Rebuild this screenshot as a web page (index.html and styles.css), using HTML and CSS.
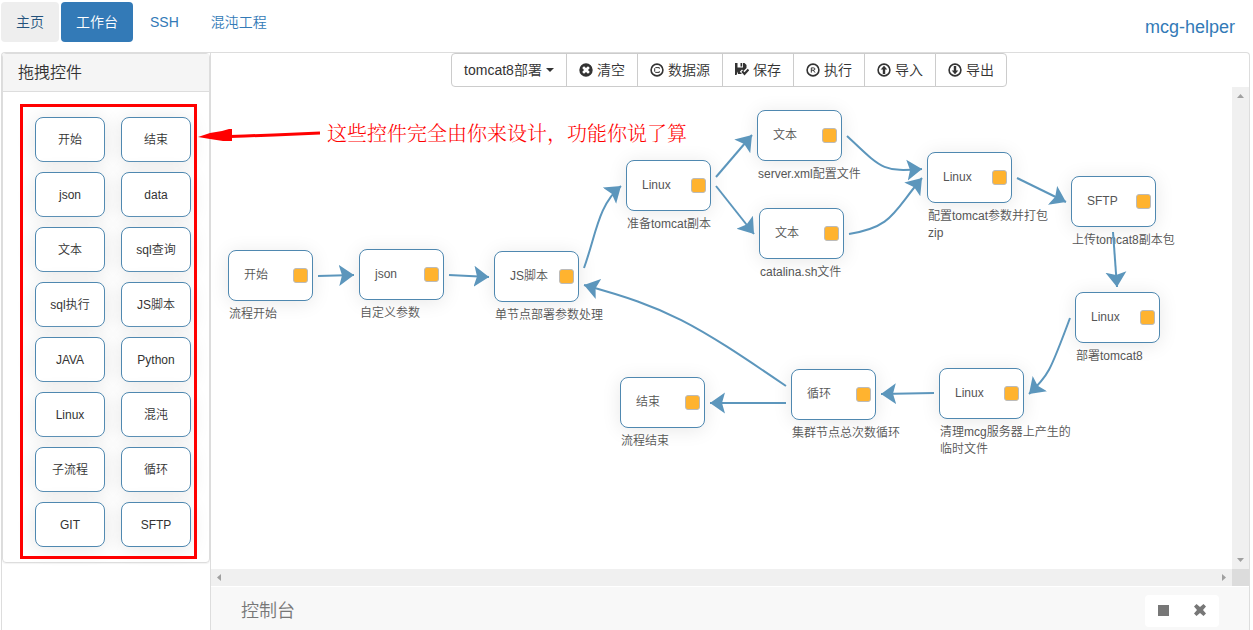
FILE: index.html
```html
<!DOCTYPE html>
<html lang="zh-CN">
<head>
<meta charset="utf-8">
<title>mcg-helper</title>
<link rel="stylesheet" href="styles.css">
</head>
<body>
<div class="app">
  <header class="topbar">
    <nav class="pills">
      <a class="pill pill-hover" href="#">主页</a>
      <a class="pill pill-active" href="#">工作台</a>
      <a class="pill" href="#">SSH</a>
      <a class="pill" href="#">混沌工程</a>
    </nav>
    <a class="brand" href="#">mcg-helper</a>
  </header>

  <main class="workspace">
    <aside class="sidebar">
      <section class="panel">
        <h2 class="panel-title">拖拽控件</h2>
        <div class="palette">
          <button class="tile">开始</button><button class="tile">结束</button>
          <button class="tile">json</button><button class="tile">data</button>
          <button class="tile">文本</button><button class="tile">sql查询</button>
          <button class="tile">sql执行</button><button class="tile">JS脚本</button>
          <button class="tile">JAVA</button><button class="tile">Python</button>
          <button class="tile">Linux</button><button class="tile">混沌</button>
          <button class="tile">子流程</button><button class="tile">循环</button>
          <button class="tile">GIT</button><button class="tile">SFTP</button>
          <div class="callout-box"></div>
        </div>
      </section>
    </aside>

    <section class="stage">
      <div class="toolbar">
        <button class="tool tool-menu">tomcat8部署<span class="caret"></span></button>
        <button class="tool"><svg class="icon" viewBox="0 0 14 14"><path fill="currentColor" fill-rule="evenodd" d="M7 .3a6.700 6.700 0 1 0 0 13.400 6.700 6.700 0 0 0 0-13.400zM5 3.200L7 5l2-1.800 1.800 1.800L9 7l1.800 2L9 10.800 7 9l-2 1.800L3.200 9 5 7 3.200 5z"/></svg>清空</button>
        <button class="tool"><svg class="icon" viewBox="0 0 14 14" fill="none" stroke="currentColor"><circle cx="7" cy="7" r="5.900" stroke-width="1.600"/><path d="M9.300 5.800V4.600H5.600l-.9.9v3l.9.9h3.700V8.200" stroke-width="1"/></svg>数据源</button>
        <button class="tool"><svg class="icon" viewBox="0 0 14 14" fill="currentColor"><path d="M0 0h2.500v4.500h5.500V0h1.500l2 2V5L8.500 8 7 6.500 4.800 8.800 7 11H3V8.500L1.500 12H0z"/><path d="M5.500 0h1.700v3.500H5.500z"/><path d="M6.300 9L7.800 7.500l1.700 1.800 3.200-3.600L14.200 7.200 9.500 12.500z"/></svg>保存</button>
        <button class="tool"><svg class="icon" viewBox="0 0 14 14" fill="none" stroke="currentColor"><circle cx="7" cy="7" r="5.900" stroke-width="1.600"/><path d="M5.300 9.600V4.900h2.400q1.200 0 1.200 1.100T7.700 7.200H5.500M7.300 7.200l1.700 2.400" stroke-width="1"/></svg>执行</button>
        <button class="tool"><svg class="icon" viewBox="0 0 14 14"><circle cx="7" cy="7" r="5.900" fill="none" stroke="currentColor" stroke-width="1.600"/><path fill="currentColor" d="M7 2.800l3.300 3.700H8.200V11H5.800V6.500H3.700z"/></svg>导入</button>
        <button class="tool"><svg class="icon" viewBox="0 0 14 14"><circle cx="7" cy="7" r="5.900" fill="none" stroke="currentColor" stroke-width="1.600"/><path fill="currentColor" d="M7 11.200L3.700 7.500h2.100V3h2.400v4.500h2.100z"/></svg>导出</button>
      </div>

      <div class="scroller">
        <div class="canvas">
          <div class="node n-start"><span>开始</span><i class="status"></i><p class="note">流程开始</p></div>
          <div class="node n-json"><span>json</span><i class="status"></i><p class="note">自定义参数</p></div>
          <div class="node n-js"><span>JS脚本</span><i class="status"></i><p class="note">单节点部署参数处理</p></div>
          <div class="node n-copy"><span>Linux</span><i class="status"></i><p class="note">准备tomcat副本</p></div>
          <div class="node n-server"><span>文本</span><i class="status"></i><p class="note">server.xml配置文件</p></div>
          <div class="node n-catalina"><span>文本</span><i class="status"></i><p class="note">catalina.sh文件</p></div>
          <div class="node n-zip"><span>Linux</span><i class="status"></i><p class="note">配置tomcat参数并打包zip</p></div>
          <div class="node n-sftp"><span>SFTP</span><i class="status"></i><p class="note">上传tomcat8副本包</p></div>
          <div class="node n-deploy"><span>Linux</span><i class="status"></i><p class="note">部署tomcat8</p></div>
          <div class="node n-clean"><span>Linux</span><i class="status"></i><p class="note">清理mcg服务器上产生的临时文件</p></div>
          <div class="node n-loop"><span>循环</span><i class="status"></i><p class="note">集群节点总次数循环</p></div>
          <div class="node n-end"><span>结束</span><i class="status"></i><p class="note">流程结束</p></div>

          <svg class="links" width="1021" height="482" viewBox="211 87 1021 482">
            <defs>
              <marker id="head" markerUnits="userSpaceOnUse" markerWidth="16" markerHeight="22" refX="15" refY="11" orient="auto">
                <path d="M15 11L0 .5l3 10.500L0 21.500z" fill="#5c96bc"/>
              </marker>
            </defs>
            <g fill="none" stroke="#5c96bc" stroke-width="2" marker-end="url(#head)">
              <path d="M318 276L354 275"/>
              <path d="M449 275L489 277"/>
              <path d="M584 268C596 235 598 205 621 186"/>
              <path d="M716 177L752 135"/>
              <path d="M716 186L754 234"/>
              <path d="M847 136C882 169 882 172 922 169"/>
              <path d="M849 234C893 227 893 212 922 178"/>
              <path d="M1017 178L1066 202"/>
              <path d="M1113 232L1117 287"/>
              <path d="M1070 318C1050 372 1048 376 1029 394"/>
              <path d="M934 393L881 394"/>
              <path d="M786 403L710 403"/>
              <path d="M786 386C692 322 668 308 584 285"/>
            </g>
          </svg>
        </div>
        <div class="bar bar-v">
          <svg class="arrow" viewBox="0 0 17 17"><path d="M5 11h7L8.500 7z"/></svg>
          <svg class="arrow" viewBox="0 0 17 17"><path d="M5 6h7l-3.500 4z"/></svg>
        </div>
        <div class="bar bar-h">
          <svg class="arrow" viewBox="0 0 17 17"><path d="M10 5v7L6 8.500z"/></svg>
          <svg class="arrow" viewBox="0 0 17 17"><path d="M7 5v7l4-3.500z"/></svg>
        </div>
        <div class="corner"></div>
      </div>

      <footer class="console">
        <h3 class="console-title">控制台</h3>
        <div class="console-actions">
          <button class="act" aria-label="停止"><svg class="icon-act" viewBox="0 0 14 14"><path d="M1 1h11v11H1z"/></svg></button>
          <button class="act" aria-label="关闭"><svg class="icon-act" viewBox="0 0 14 14"><path d="M3.500 0L7 3l3.500-3L13 2.500 10 6l3 3.500-2.500 2.500L7 9l-3.500 3L1 9.500 4 6 1 2.500z"/></svg></button>
        </div>
      </footer>
    </section>
  </main>

  <div class="callout">
    <svg class="callout-arrow" width="124" height="18" viewBox="197 124 124 18">
      <path d="M198 136l12-4 12-2 7-2h3v12h-9l-13-2z" fill="#f00"/>
      <path d="M230 135.500l15-.5 29-1 46-2" fill="none" stroke="#f00" stroke-width="3"/>
    </svg>
    <span class="callout-text">这些控件完全由你来设计，功能你说了算</span>
  </div>
</div>
</body>
</html>
```

FILE: styles.css
```css
* {
  box-sizing: border-box;
}

body {
  margin: 0;
  background: #fff;
  color: #333;
  font: 14px/20px "Liberation Sans", "Noto Sans CJK SC", sans-serif;
  font-weight: 350;
}

button {
  margin: 0;
  font: inherit;
  color: inherit;
  cursor: pointer;
}

a {
  color: #337ab7;
  text-decoration: none;
}

.app {
  position: relative;
  display: flex;
  flex-direction: column;
  height: 100vh;
  overflow: hidden;
  padding: 2px 3px 0 1px;
}

.topbar {
  display: flex;
  justify-content: space-between;
  height: 50px;
  flex: none;
}

.pills {
  display: flex;
  align-items: flex-start;
  gap: 2px;
}

.pill {
  padding: 10px 15px;
  border-radius: 4px;
}

.pill-hover {
  background: #eee;
  color: #23527c;
}

.pill-active {
  background: #337ab7;
  color: #fff;
}

.brand {
  padding: 15px;
  font-size: 18px;
}

.workspace {
  display: flex;
  flex: 1;
  min-height: 0;
  border: 1px solid #ddd;
  border-bottom: 0;
  border-radius: 4px 4px 0 0;
}

.sidebar {
  flex: none;
  width: 209px;
  border-right: 1px solid #ddd;
}

.panel {
  border: 1px solid #ddd;
  border-radius: 4px;
  box-shadow: 0 1px 1px rgba(0, 0, 0, 0.05);
}

.panel-title {
  margin: 0;
  padding: 9px 15px 8px;
  background: #f5f5f5;
  border-bottom: 1px solid #ddd;
  font-size: 16px;
  font-weight: inherit;
  line-height: 20px;
}

.palette {
  position: relative;
  display: grid;
  grid-template-columns: 70px 70px;
  gap: 10px 16px;
  padding: 25px 0 15px 32px;
}

.tile {
  height: 45px;
  padding: 0;
  background: #fff;
  border: 1px solid #4f88b0;
  border-radius: 8px;
  box-shadow: 0 2px 19px #e6e6e6;
  font-size: 12px;
}

.callout-box {
  position: absolute;
  inset: 12px 12px 3px 17px;
  border: 3px solid #f00;
  pointer-events: none;
}

.stage {
  display: flex;
  flex: 1;
  flex-direction: column;
  min-width: 0;
}

.toolbar {
  display: flex;
  justify-content: center;
  flex: none;
  padding-right: 2px;
}

.tool {
  display: flex;
  align-items: center;
  gap: 4px;
  height: 34px;
  margin-left: -1px;
  padding: 0 12px;
  background: #fff;
  border: 1px solid #ccc;
}

.tool:first-child {
  margin-left: 0;
  border-radius: 4px 0 0 4px;
}

.tool:last-child {
  border-radius: 0 4px 4px 0;
}

.icon {
  width: 14px;
  height: 14px;
}

.caret {
  border: 4px solid transparent;
  border-top-color: #333;
  border-bottom: 0;
}

.scroller {
  display: grid;
  flex: 1;
  grid-template: 1fr 17px / 1fr 17px;
  min-height: 0;
}

.canvas {
  position: relative;
  overflow: hidden;
}

.links {
  position: absolute;
  left: 0;
  top: 0;
}

.node {
  position: absolute;
  display: flex;
  align-items: center;
  justify-content: space-between;
  width: 85px;
  height: 51px;
  padding: 0 4px 0 15px;
  background: #fff;
  border: 1px solid #4f88b0;
  border-radius: 8px;
  box-shadow: 0 2px 19px #e8e8e8;
  color: #555;
  font-size: 12px;
}

.node span {
  padding-bottom: 2px;
}

.status {
  width: 15px;
  height: 15px;
  background: #ffb32f;
  border: 1px solid #bbb;
  border-radius: 3px;
}

.note {
  position: absolute;
  left: 0;
  top: 55px;
  width: 132px;
  margin: 0;
  line-height: 17px;
}

.n-start { left: 17px; top: 163px; }
.n-json { left: 148px; top: 162px; }
.n-js { left: 283px; top: 164px; }
.n-copy { left: 415px; top: 73px; }
.n-server { left: 546px; top: 23px; }
.n-catalina { left: 548px; top: 121px; }
.n-zip { left: 716px; top: 65px; }
.n-sftp { left: 860px; top: 89px; }
.n-deploy { left: 864px; top: 205px; }
.n-clean { left: 728px; top: 281px; }
.n-loop { left: 580px; top: 282px; }
.n-end { left: 409px; top: 290px; }

.bar {
  display: flex;
  justify-content: space-between;
  background: #f0f0f0;
}

.bar-v {
  flex-direction: column;
}

.bar-h {
  grid-row: 2;
}

.arrow {
  width: 17px;
  height: 17px;
  fill: #a0a0a0;
}

.corner {
  background: #dcdcdc;
}

.console {
  display: flex;
  align-items: flex-start;
  justify-content: space-between;
  flex: none;
  height: 43px;
  margin-top: 1px;
  padding: 8px 30px 0;
  background: #f8f8f8;
  color: #777;
}

.console-title {
  margin: 0;
  font-size: 18px;
  font-weight: inherit;
  line-height: 32px;
}

.console-actions {
  display: flex;
  padding: 0 1px;
  background: #fff;
  border-radius: 4px;
}

.act {
  display: flex;
  align-items: center;
  justify-content: center;
  width: 36px;
  height: 32px;
  padding: 0;
  background: none;
  border: 0;
}

.icon-act {
  width: 14px;
  height: 14px;
  fill: #777;
}

.callout {
  position: absolute;
  left: 197px;
  top: 122px;
  display: flex;
  align-items: center;
  gap: 6px;
  color: #f00;
  font-family: "Liberation Serif", "Noto Serif CJK SC", "Noto Sans CJK SC", serif;
  font-size: 20px;
  line-height: 24px;
}
```
